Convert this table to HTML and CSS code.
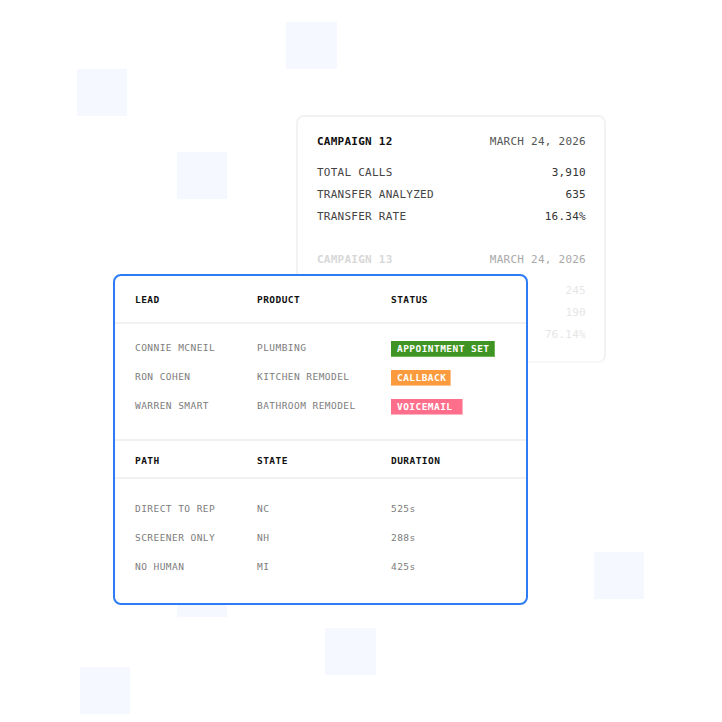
FILE: index.html
```html
<!DOCTYPE html>
<html>
<head>
<meta charset="utf-8">
<link rel="stylesheet" href="styles.css">
</head>
<body>
<div class="canvas">
  <div class="sq sq1"></div>
  <div class="sq sq2"></div>
  <div class="sq sq3"></div>
  <div class="sq sq4"></div>
  <div class="sq sq5"></div>
  <div class="sq sq6"></div>
  <div class="sq sq7"></div>

  <div class="campaign-card">
    <div class="block">
      <div class="line title"><span class="name">CAMPAIGN 12</span><span class="date">MARCH 24, 2026</span></div>
      <div class="stats">
        <div class="line stat"><span>TOTAL CALLS</span><span class="val">3,910</span></div>
        <div class="line stat"><span>TRANSFER ANALYZED</span><span class="val">635</span></div>
        <div class="line stat"><span>TRANSFER RATE</span><span class="val">16.34%</span></div>
      </div>
    </div>
    <div class="block faded">
      <div class="line title"><span class="name">CAMPAIGN 13</span><span class="date">MARCH 24, 2026</span></div>
      <div class="stats">
        <div class="line stat"><span></span><span class="val">245</span></div>
        <div class="line stat"><span></span><span class="val">190</span></div>
        <div class="line stat"><span></span><span class="val">76.14%</span></div>
      </div>
    </div>
  </div>

  <div class="table-card">
    <div class="grid head head-first">
      <span>LEAD</span><span>PRODUCT</span><span>STATUS</span>
    </div>
    <div class="body body-first">
      <div class="grid row"><span>CONNIE MCNEIL</span><span>PLUMBING</span><span><span class="badge green">APPOINTMENT SET</span></span></div>
      <div class="grid row"><span>RON COHEN</span><span>KITCHEN REMODEL</span><span><span class="badge orange">CALLBACK</span></span></div>
      <div class="grid row"><span>WARREN SMART</span><span>BATHROOM REMODEL</span><span><span class="badge pink">VOICEMAIL</span></span></div>
    </div>
    <div class="grid head head-second">
      <span>PATH</span><span>STATE</span><span>DURATION</span>
    </div>
    <div class="body body-second">
      <div class="grid row"><span>DIRECT TO REP</span><span>NC</span><span>525s</span></div>
      <div class="grid row"><span>SCREENER ONLY</span><span>NH</span><span>288s</span></div>
      <div class="grid row"><span>NO HUMAN</span><span>MI</span><span>425s</span></div>
    </div>
  </div>
</div>
</body>
</html>
```
FILE: styles.css
```css
* { box-sizing: border-box; }
html, body { margin: 0; padding: 0; background: #fff; }
body { font-family: "DejaVu Sans Mono", "Liberation Mono", monospace; }

.canvas {
  position: relative;
  width: 722px;
  height: 722px;
  overflow: hidden;
  background: #fff;
}

.sq {
  position: absolute;
  width: 50px;
  height: 47px;
  background: #f5f8ff;
}
.sq1 { left: 77px; top: 69px; }
.sq2 { left: 286px; top: 22px; width: 51px; }
.sq3 { left: 177px; top: 152px; }
.sq4 { left: 594px; top: 552px; }
.sq5 { left: 325px; top: 628px; width: 51px; }
.sq6 { left: 80px; top: 667px; }
.sq7 { left: 177px; top: 570px; }

/* campaign card */
.campaign-card {
  position: absolute;
  left: 296px;
  top: 115px;
  width: 310px;
  height: 248px;
  border: 2px solid #f2f2f2;
  border-bottom-color: #f8f8f8;
  border-radius: 8px;
  background: #fff;
  padding: 14px 18px 0 19px;
  font-size: 11px;
  letter-spacing: 0.25px;
  display: flex;
  flex-direction: column;
  gap: 21px;
}
.block { display: flex; flex-direction: column; gap: 9px; }
.line {
  display: flex;
  justify-content: space-between;
  height: 22px;
  line-height: 22px;
  white-space: nowrap;
}
.title .name { font-weight: bold; color: #111; }
.title .date { color: #555; }
.stat { color: #444; }
.stat .val { color: #333; }

.faded .title .name { color: #d8d8d8; }
.faded .title .date { color: #a9a9a9; }
.faded .stat .val { color: #e6e6e6; }

/* table card */
.table-card {
  position: absolute;
  left: 113px;
  top: 274px;
  width: 415px;
  height: 331px;
  border: 2px solid #2d7bf5;
  border-radius: 8px;
  background: #fff;
  font-size: 9.5px;
  letter-spacing: 0.45px;
  display: flex;
  flex-direction: column;
}
.grid {
  display: grid;
  grid-template-columns: 122px 134px 1fr;
  padding-left: 20px;
  height: 16px;
  line-height: 16px;
  align-items: center;
  white-space: nowrap;
}
.head {
  box-sizing: content-box;
  font-weight: bold;
  color: #111;
}
.head-first { padding-top: 16px; padding-bottom: 14px; border-bottom: 2px solid #f1f1f1; }
.head-second { padding-top: 12px; padding-bottom: 8px; border-top: 2px solid #f1f1f1; border-bottom: 2px solid #f1f1f1; }

.body { display: flex; flex-direction: column; gap: 13px; }
.body-first { padding-top: 16px; padding-bottom: 25px; }
.body-second { padding-top: 22px; }
.row { color: #7c7c7c; }

.badge {
  display: inline-block;
  height: 16px;
  line-height: 16px;
  padding: 0 5px 0 6px;
  color: #fff;
  font-weight: bold;
  vertical-align: middle;
}
.green { background: #3f9423; box-shadow: inset -1px -1px 0 #6cb556; }
.orange { background: #fb9b3d; box-shadow: inset -1px -1px 0 #fcc38c; }
.pink { background: #ff6f8c; padding-right: 10px; box-shadow: inset -1px -1px 0 #ffb4c3; }
```
